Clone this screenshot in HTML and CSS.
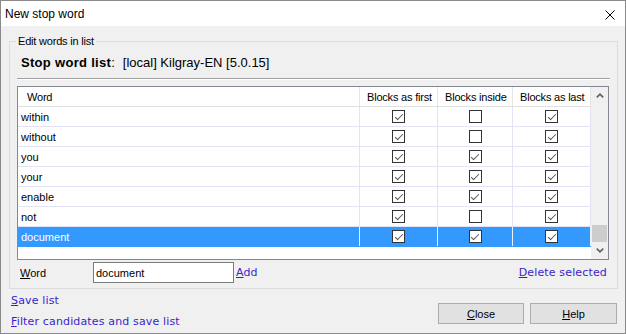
FILE: index.html
```html
<!DOCTYPE html>
<html>
<head>
  <title>New stop word</title>
  <meta charset="UTF-8">
  <link rel="stylesheet" href="styles.css">
</head>
<body>
  <div class="window">
    <div class="titlebar">
      <span class="title">New stop word</span>
      <svg class="close-x" width="10" height="10" viewBox="0 0 10 10">
        <path d="M0.5 0.5 L9.5 9.5 M9.5 0.5 L0.5 9.5" stroke="#000" stroke-width="1" fill="none"/>
      </svg>
    </div>

    <div class="dialog">
      <fieldset class="group">
        <legend>Edit words in list</legend>
        <div class="list-name"><b>Stop word list</b>:<span class="list-value">[local] Kilgray-EN [5.0.15]</span></div>
        <div class="separator"></div>

        <div class="listview">
          <div class="rows">
            <div class="row header">
              <div class="cell word">Word</div>
              <div class="cell">Blocks as first</div>
              <div class="cell">Blocks inside</div>
              <div class="cell">Blocks as last</div>
            </div>
            <div class="row">
              <div class="cell word">within</div>
              <div class="cell check"><span class="cb on"></span></div>
              <div class="cell check"><span class="cb"></span></div>
              <div class="cell check"><span class="cb on"></span></div>
            </div>
            <div class="row">
              <div class="cell word">without</div>
              <div class="cell check"><span class="cb on"></span></div>
              <div class="cell check"><span class="cb"></span></div>
              <div class="cell check"><span class="cb on"></span></div>
            </div>
            <div class="row">
              <div class="cell word">you</div>
              <div class="cell check"><span class="cb on"></span></div>
              <div class="cell check"><span class="cb on"></span></div>
              <div class="cell check"><span class="cb on"></span></div>
            </div>
            <div class="row">
              <div class="cell word">your</div>
              <div class="cell check"><span class="cb on"></span></div>
              <div class="cell check"><span class="cb on"></span></div>
              <div class="cell check"><span class="cb on"></span></div>
            </div>
            <div class="row">
              <div class="cell word">enable</div>
              <div class="cell check"><span class="cb on"></span></div>
              <div class="cell check"><span class="cb on"></span></div>
              <div class="cell check"><span class="cb on"></span></div>
            </div>
            <div class="row">
              <div class="cell word">not</div>
              <div class="cell check"><span class="cb on"></span></div>
              <div class="cell check"><span class="cb"></span></div>
              <div class="cell check"><span class="cb on"></span></div>
            </div>
            <div class="row selected">
              <div class="cell word">document</div>
              <div class="cell check"><span class="cb on"></span></div>
              <div class="cell check"><span class="cb on"></span></div>
              <div class="cell check"><span class="cb on"></span></div>
            </div>
          </div>
          <div class="scrollbar">
            <div class="sb-btn">
              <svg width="8" height="5" viewBox="0 0 8 5"><path d="M0.8 4.4 L4 1.2 L7.2 4.4" stroke="#606060" stroke-width="1.6" fill="none"/></svg>
            </div>
            <div class="sb-track"><div class="sb-thumb"></div></div>
            <div class="sb-btn">
              <svg width="8" height="5" viewBox="0 0 8 5"><path d="M0.8 0.6 L4 3.8 L7.2 0.6" stroke="#606060" stroke-width="1.6" fill="none"/></svg>
            </div>
          </div>
        </div>

        <div class="word-row">
          <label class="word-label" for="word"><u>W</u>ord</label>
          <input class="word-input" id="word" type="text" value="document">
          <a class="link add-link" href="#"><u>A</u>dd</a>
          <a class="link delete-link" href="#"><u>D</u>elete selected</a>
        </div>
      </fieldset>

      <div class="footer">
        <div class="links">
          <a class="link" href="#"><u>S</u>ave list</a>
          <a class="link" href="#"><u>F</u>ilter candidates and save list</a>
        </div>
        <div class="buttons">
          <button class="btn close-btn" type="button"><u>C</u>lose</button>
          <button class="btn help-btn" type="button"><u>H</u>elp</button>
        </div>
      </div>
    </div>
  </div>
</body>
</html>
```

FILE: styles.css
```css
* {
  box-sizing: border-box;
}

body {
  margin: 0;
  font-family: "Liberation Sans", Arial, sans-serif;
  font-size: 11px;
  color: #000;
}

.window {
  width: 626px;
  height: 334px;
  border: 1px solid #8a8a8a;
  background-color: #f0f0f0;
  display: flex;
  flex-direction: column;
}

.titlebar {
  height: 25px;
  background-color: #fff;
  display: flex;
  align-items: center;
  justify-content: space-between;
  padding: 0 10px 0 4px;
  font-size: 12px;
}

.close-x {
  margin-top: 2px;
}

.dialog {
  flex: 1;
  padding: 9px 7px 0 8px;
  display: flex;
  flex-direction: column;
}

.group {
  margin: 0;
  padding: 0 7px 5px;
  border: 1px solid #dcdcdc;
  min-width: 0;
}

.group legend {
  padding: 0 2px;
  margin-left: -1px;
  line-height: 13px;
  letter-spacing: -0.2px;
}

.list-name {
  margin: 6px 0 0 4px;
  font-size: 13px;
  line-height: 18px;
}

.list-name b {
  letter-spacing: 0.3px;
}

.list-value {
  margin-left: 8px;
}

.separator {
  height: 2px;
  margin: 6px 0;
  border-top: 1px solid #a0a0a0;
  border-bottom: 1px solid #fff;
}

.listview {
  height: 174px;
  margin-right: 1px;
  border: 1px solid #828790;
  background-color: #fff;
  display: flex;
}

.rows {
  flex: 1;
}

.row {
  display: grid;
  grid-template-columns: 342px 78px 75px 78px;
  height: 20px;
  border-bottom: 1px solid #e3e3f6;
}

.cell {
  border-right: 1px solid #e3e3f6;
  padding-left: 7px;
  display: flex;
  align-items: center;
  white-space: nowrap;
}

.cell.word {
  padding-left: 3px;
}

.cell.check {
  padding-left: 0;
  justify-content: center;
}

.header {
  border-bottom-color: #e0e0e0;
  letter-spacing: -0.2px;
}

.header .cell {
  border-right-color: #e5e5e5;
}

.header .cell.word {
  padding-left: 9px;
}

.row.selected {
  background-color: #3399ff;
  color: #fff;
  border-bottom-color: #3399ff;
}

.row.selected .cell {
  border-right-color: #e8f2ff;
}

.cb {
  width: 13px;
  height: 13px;
  border: 1px solid #333;
  background-color: #fff;
  display: flex;
  align-items: center;
  justify-content: center;
}

.cb.on::after {
  content: "";
  width: 7px;
  height: 3px;
  margin-top: -2px;
  border-left: 1px solid #555;
  border-bottom: 1px solid #555;
  transform: rotate(-45deg);
}

.scrollbar {
  width: 17px;
  background-color: #f0f0f0;
  display: flex;
  flex-direction: column;
}

.sb-btn {
  height: 17px;
  display: flex;
  align-items: center;
  justify-content: center;
}

.sb-track {
  flex: 1;
  padding: 0 1px;
  display: flex;
  flex-direction: column;
  justify-content: flex-end;
}

.sb-thumb {
  height: 17px;
  background-color: #cdcdcd;
}

.word-row {
  display: flex;
  align-items: center;
  margin-top: 2px;
  height: 21px;
}

.word-label {
  width: 76px;
  padding-left: 3px;
}

.word-input {
  width: 141px;
  height: 21px;
  margin: 0;
  padding: 0 2px;
  border: 1px solid #7a7a7a;
  font-family: "Liberation Sans", Arial, sans-serif;
  font-size: 11px;
  color: #000;
  outline: none;
}

.link {
  font-family: "DejaVu Sans", Verdana, sans-serif;
  font-size: 11px;
  letter-spacing: 0.15px;
  color: #3a1ecc;
  text-decoration: none;
}

.add-link {
  margin-left: 2px;
}

.delete-link {
  margin-left: auto;
  margin-right: 3px;
}

.footer {
  display: flex;
  justify-content: space-between;
  align-items: flex-start;
  padding: 0 1px 0 2px;
}

.links {
  display: flex;
  flex-direction: column;
  line-height: 21px;
  padding-top: 1px;
}

.buttons {
  display: flex;
  gap: 6px;
  margin-top: 14px;
}

.btn {
  height: 21px;
  margin: 0;
  padding: 0;
  background-color: #e1e1e1;
  border: 1px solid #adadad;
  font-family: "Liberation Sans", Arial, sans-serif;
  font-size: 11px;
  color: #000;
}

.close-btn {
  width: 86px;
}

.help-btn {
  width: 87px;
}
```
